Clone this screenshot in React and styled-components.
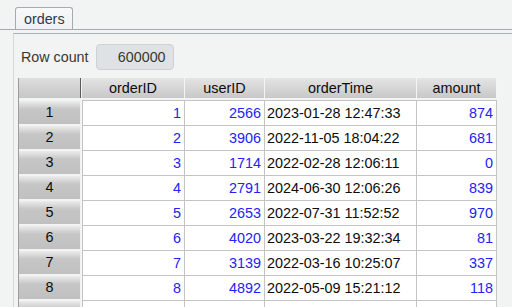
import styled, { createGlobalStyle } from "styled-components";

const GlobalStyle = createGlobalStyle`
  html, body {
    margin: 0;
    padding: 0;
    background: #f2f4f3;
    font-family: "Liberation Sans", Arial, sans-serif;
    font-size: 14px;
  }
`;

const Page = styled.div`
  height: 100vh;
  overflow: hidden;
`;

const TabStrip = styled.div`
  height: 22px;
  padding: 7px 0 0 15px;
  border-bottom: 1px solid #a3abb0;
  display: flex;
`;

const Tab = styled.div`
  height: 22px;
  margin-bottom: -1px;
  padding: 0 7px 0 8px;
  box-sizing: border-box;
  border: 1px solid #a3abb0;
  border-bottom: none;
  border-radius: 3px 3px 0 0;
  background: linear-gradient(#f8f9f9, #eef1f2);
  color: #2f3a48;
  font-size: 14.3px;
  line-height: 22px;
`;

const Panel = styled.div`
  margin: 3px 0 0 13px;
  border-top: 1px solid #aab1b5;
  border-left: 1px solid #d4d8da;
  padding-top: 10px;
`;

const CountRow = styled.div`
  display: flex;
  align-items: center;
  gap: 7px;
  margin-left: 7px;
  font-size: 14.3px;
`;

const Label = styled.span`
  color: #3a3632;
`;

const CountBox = styled.div`
  width: 78px;
  height: 26px;
  box-sizing: border-box;
  border: 1px solid #cdd1d4;
  border-radius: 4px;
  background: #dfe2e5;
  color: #3a3632;
  text-align: right;
  padding-right: 7px;
  line-height: 24px;
`;

const Table = styled.div`
  margin: 8px 0 0 4px;
  width: 479px;
  border-left: 1px solid #9c9c9c;
  font-size: 14.4px;
`;

const HeadRow = styled.div`
  display: flex;
  height: 20px;
  margin-bottom: 2px;
`;

const Corner = styled.div`
  width: 61px;
  background: linear-gradient(#dedede, #c6c6c6);
  border-right: 1px solid #5a5a5a;
  margin-right: 1px;
`;

const HeadCells = styled.div`
  display: grid;
  grid-template-columns: 102px 79px 151px 79px;
  column-gap: 1px;
  background: #f4f4f4;
  padding-right: 1px;
`;

const HeadCell = styled.div`
  background: linear-gradient(#e4e4e4, #c8c8c8);
  color: #0c0c0c;
  text-align: center;
  line-height: 20px;
`;

const Row = styled.div`
  display: flex;
  height: 25px;
`;

const RowHead = styled.div`
  width: 61px;
  height: 23px;
  margin: 1px 2px 0 0;
  background: linear-gradient(#ececec, #c6c6c6 35%, #c0c0c0);
  color: #0c0c0c;
  text-align: center;
  line-height: 23px;
`;

const Cells = styled.div`
  display: grid;
  grid-template-columns: 101px 79px 151px 79px;
  column-gap: 1px;
  background: #c4c4c4;
  padding: 1px 1px 0 1px;
`;

const Cell = styled.div`
  background: #fff;
  line-height: 24px;
  white-space: nowrap;
  text-align: ${(p) => (p.$num ? "right" : "left")};
  color: ${(p) => (p.$num ? "#2323f5" : "#0c0c0c")};
  padding: ${(p) => (p.$num ? "0 3px 0 0" : "0 0 0 2px")};
`;

const rows = [
  [1, 2566, "2023-01-28 12:47:33", 874],
  [2, 3906, "2022-11-05 18:04:22", 681],
  [3, 1714, "2022-02-28 12:06:11", 0],
  [4, 2791, "2024-06-30 12:06:26", 839],
  [5, 2653, "2022-07-31 11:52:52", 970],
  [6, 4020, "2023-03-22 19:32:34", 81],
  [7, 3139, "2022-03-16 10:25:07", 337],
  [8, 4892, "2022-05-09 15:21:12", 118],
  [9, "", "", ""],
];

export default function App() {
  return (
    <Page>
      <GlobalStyle />
      <TabStrip>
        <Tab>orders</Tab>
      </TabStrip>
      <Panel>
        <CountRow>
          <Label>Row count</Label>
          <CountBox>600000</CountBox>
        </CountRow>
        <Table>
          <HeadRow>
            <Corner />
            <HeadCells>
              <HeadCell>orderID</HeadCell>
              <HeadCell>userID</HeadCell>
              <HeadCell>orderTime</HeadCell>
              <HeadCell>amount</HeadCell>
            </HeadCells>
          </HeadRow>
          {rows.map(([id, user, time, amount]) => (
            <Row key={id}>
              <RowHead>{id < 9 ? id : ""}</RowHead>
              <Cells>
                <Cell $num>{id < 9 ? id : ""}</Cell>
                <Cell $num>{user}</Cell>
                <Cell>{time}</Cell>
                <Cell $num>{amount}</Cell>
              </Cells>
            </Row>
          ))}
        </Table>
      </Panel>
    </Page>
  );
}
